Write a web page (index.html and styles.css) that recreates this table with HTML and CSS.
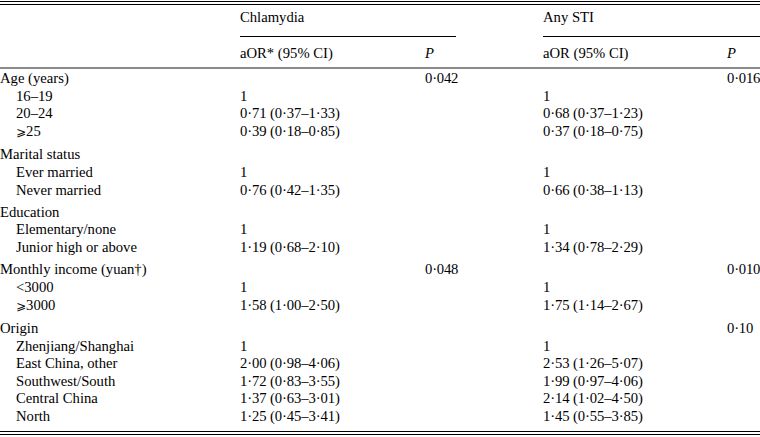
FILE: index.html
```html
<!DOCTYPE html>
<html lang="en">
<head>
<meta charset="utf-8">
<title>Adjusted odds ratios</title>
<link rel="stylesheet" href="styles.css">
</head>
<body>
<div class="frame">
<table class="tbl">
<colgroup>
<col class="c-label"><col class="c-or"><col class="c-p"><col class="c-gap"><col class="c-or2"><col class="c-p2">
</colgroup>
<thead>
<tr class="h1">
<th></th><th colspan="2" class="span">Chlamydia</th><th></th><th colspan="2" class="span">Any STI</th>
</tr>
<tr class="h2">
<th></th><th>aOR* (95% CI)</th><th><i>P</i></th><th></th><th>aOR (95% CI)</th><th><i>P</i></th>
</tr>
</thead>
<tbody>
<tr class="grp first"><td>Age (years)</td><td></td><td class="pv">0·042</td><td></td><td></td><td class="pv">0·016</td></tr>
<tr><td class="sub">16–19</td><td class="n">1</td><td></td><td></td><td class="n">1</td><td></td></tr>
<tr><td class="sub">20–24</td><td class="n">0·71 (0·37–1·33)</td><td></td><td></td><td class="n">0·68 (0·37–1·23)</td><td></td></tr>
<tr><td class="sub"><span class="ge">⩾</span>25</td><td class="n">0·39 (0·18–0·85)</td><td></td><td></td><td class="n">0·37 (0·18–0·75)</td><td></td></tr>
<tr class="grp"><td>Marital status</td><td></td><td></td><td></td><td></td><td></td></tr>
<tr><td class="sub">Ever married</td><td class="n">1</td><td></td><td></td><td class="n">1</td><td></td></tr>
<tr><td class="sub">Never married</td><td class="n">0·76 (0·42–1·35)</td><td></td><td></td><td class="n">0·66 (0·38–1·13)</td><td></td></tr>
<tr class="grp"><td>Education</td><td></td><td></td><td></td><td></td><td></td></tr>
<tr><td class="sub">Elementary/none</td><td class="n">1</td><td></td><td></td><td class="n">1</td><td></td></tr>
<tr><td class="sub">Junior high or above</td><td class="n">1·19 (0·68–2·10)</td><td></td><td></td><td class="n">1·34 (0·78–2·29)</td><td></td></tr>
<tr class="grp"><td>Monthly income (yuan†)</td><td></td><td class="pv">0·048</td><td></td><td></td><td class="pv">0·010</td></tr>
<tr><td class="sub">&lt;3000</td><td class="n">1</td><td></td><td></td><td class="n">1</td><td></td></tr>
<tr><td class="sub"><span class="ge">⩾</span>3000</td><td class="n">1·58 (1·00–2·50)</td><td></td><td></td><td class="n">1·75 (1·14–2·67)</td><td></td></tr>
<tr class="grp"><td>Origin</td><td></td><td></td><td></td><td></td><td class="pv">0·10</td></tr>
<tr><td class="sub">Zhenjiang/Shanghai</td><td class="n">1</td><td></td><td></td><td class="n">1</td><td></td></tr>
<tr><td class="sub">East China, other</td><td class="n">2·00 (0·98–4·06)</td><td></td><td></td><td class="n">2·53 (1·26–5·07)</td><td></td></tr>
<tr><td class="sub">Southwest/South</td><td class="n">1·72 (0·83–3·55)</td><td></td><td></td><td class="n">1·99 (0·97–4·06)</td><td></td></tr>
<tr><td class="sub">Central China</td><td class="n">1·37 (0·63–3·01)</td><td></td><td></td><td class="n">2·14 (1·02–4·50)</td><td></td></tr>
<tr class="last"><td class="sub">North</td><td class="n">1·25 (0·45–3·41)</td><td></td><td></td><td class="n">1·45 (0·55–3·85)</td><td></td></tr>
</tbody>
</table>
</div>
</body>
</html>
```
FILE: styles.css
```css
html, body {
  margin: 0;
  padding: 0;
  background: #fff;
}
body {
  font-family: "Liberation Serif", "DejaVu Serif", "DejaVu Sans", serif;
  font-size: 14.67px;
  line-height: 17.6px;
  color: #000;
}
.frame {
  width: 760px;
  margin-top: 1px;
  border-top: 1px solid #000;
  border-bottom: 1px solid #000;
  padding: 2px 0;
}
.tbl {
  width: 760px;
  table-layout: fixed;
  border-collapse: separate;
  border-spacing: 0;
  border-top: 1px solid #000;
  border-bottom: 1px solid #000;
}
.c-label { width: 240px; }
.c-or { width: 185px; }
.c-p { width: 31px; }
.c-gap { width: 87px; }
.c-or2 { width: 184px; }
.c-p2 { width: 33px; }
th, td {
  padding: 0;
  text-align: left;
  font-weight: normal;
  white-space: nowrap;
  overflow: visible;
  vertical-align: top;
}
.h1 th {
  padding-top: 4px;
  padding-bottom: 9.4px;
  border-bottom: 1px solid transparent;
}
.h1 th.span {
  border-bottom-color: #000;
}
.h2 th {
  padding-top: 8.2px;
  padding-bottom: 4.2px;
  border-bottom: 2px solid #8a8a8a;
}
.grp td {
  padding-top: 4.8px;
}
.grp.first td {
  padding-top: 1.2px;
}
.last td {
  padding-bottom: 5px;
}
.sub {
  padding-left: 16px;
}
.n {
  letter-spacing: -0.1px;
}
.pv {
  letter-spacing: -0.2px;
}
.ge {
  font-family: "DejaVu Serif", "DejaVu Sans", serif;
  font-size: 12px;
}
```
